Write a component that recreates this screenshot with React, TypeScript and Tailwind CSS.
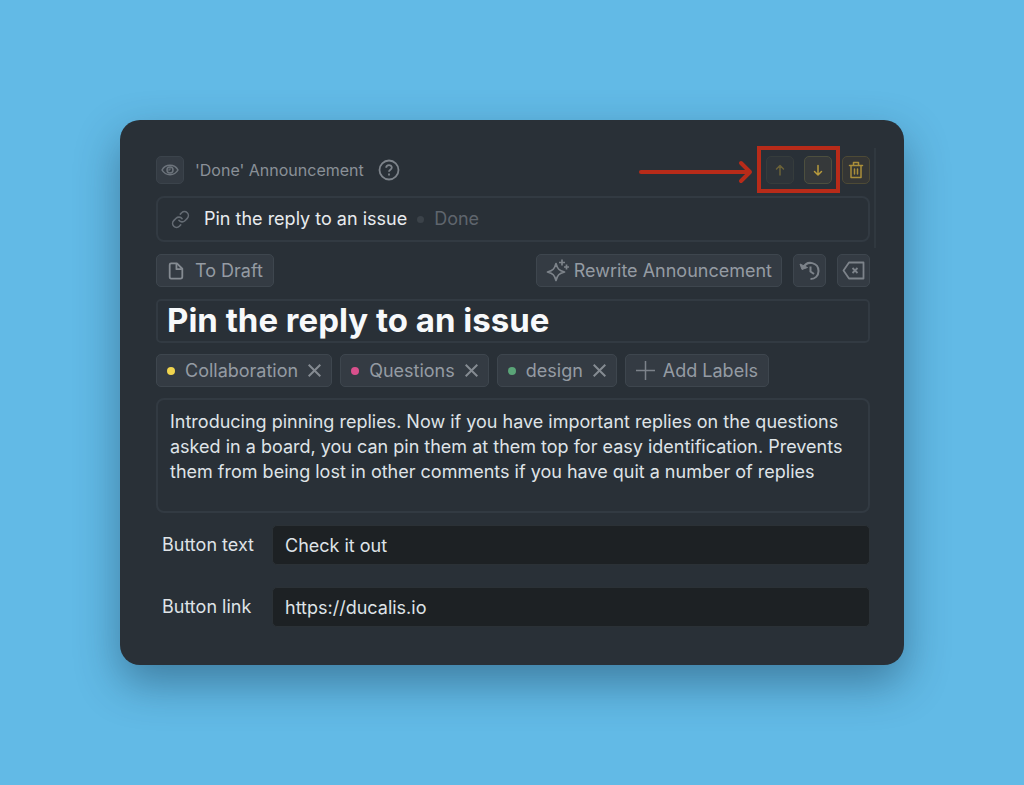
import { useState } from 'react';
import type { ReactNode } from 'react';
import clsx from 'clsx';
import { Link } from 'lucide-react';

interface Label {
  name: string;
  dot: string;
}

const INITIAL_LABELS: Label[] = [
  { name: 'Collaboration', dot: 'bg-[#f0d44e]' },
  { name: 'Questions', dot: 'bg-[#d9508c]' },
  { name: 'design', dot: 'bg-[#5aa578]' },
];

const PANEL = 'border-2 border-[#323a42] bg-transparent outline-none';
const CONTROL = 'flex items-center rounded-[5px] border border-[#3e464e] bg-[#343b43] text-[#959ba3]';

export default function App() {
  const [labels, setLabels] = useState(INITIAL_LABELS);
  const [title, setTitle] = useState('Pin the reply to an issue');
  const [body, setBody] = useState(
    'Introducing pinning replies. Now if you have important replies on the questions asked in a board, you can pin them at them top for easy identification. Prevents them from being lost in other comments if you have quit a number of replies'
  );

  return (
    <div className="min-h-screen bg-[#62bae6] p-[120px] font-['Inter',sans-serif] text-[18px] leading-6 text-[#dfe3e7]">
      <main className="relative flex flex-col gap-3 rounded-[20px] bg-[#293037] pt-9 pr-[34px] pb-[38px] pl-9 shadow-[0_18px_44px_rgba(20,50,75,0.45)]">
        <div className="absolute top-7 right-7 h-[100px] w-[2px] bg-[#30383f]" />

        <header className="flex h-7 items-center">
          <IconButton label="Preview">
            <EyeIcon />
          </IconButton>
          <span className="ml-[11px] text-[16px] text-[#8a9098]">'Done' Announcement</span>
          <button aria-label="Help" className="ml-[14px] text-[#7d838a]">
            <HelpIcon />
          </button>

          <div className="ml-auto flex items-center gap-[10px]">
            <div className="relative flex gap-[10px]">
              <div className="absolute -top-[10px] -right-2 -bottom-[9px] -left-[9px] border-4 border-[#b82b19]" />
              <PointerArrow />
              <IconButton label="Move up" tone="faint">
                <path d="M14 19V9.500M10.500 13L14 9.500L17.500 13" />
              </IconButton>
              <IconButton label="Move down" tone="gold">
                <path d="M14 9.500V19M10.500 15.500L14 19L17.500 15.500" />
              </IconButton>
            </div>
            <IconButton label="Delete" tone="trash">
              <path d="M7.500 9.500H20.500M11.500 9V6.500H16.500V9M9 9.500V21.500H19V9.500M12.500 13V18M15.500 13V18" />
            </IconButton>
          </div>
        </header>

        <div className={clsx(PANEL, 'flex h-[46px] items-center rounded-lg px-[13px]')}>
          <Link size={19} strokeWidth={2} color="#656c74" />
          <a href="#issue" className="ml-[14px] text-[#e8ebee]">Pin the reply to an issue</a>
          <span className="mx-[10px] size-[7px] rounded-full bg-[#3b4249]" />
          <span className="text-[#5f656d]">Done</span>
        </div>

        <div className="flex gap-[11px]">
          <button className={clsx(CONTROL, 'mr-auto h-[33px] gap-[10px] px-[10px]')}>
            <FileIcon />
            To Draft
          </button>
          <button className={clsx(CONTROL, 'h-[33px] gap-1 px-[9px]')}>
            <SparkIcon />
            Rewrite Announcement
          </button>
          <button aria-label="History" className={clsx(CONTROL, 'size-[33px] justify-center')}>
            <HistoryIcon />
          </button>
          <button aria-label="Clear" className={clsx(CONTROL, 'size-[33px] justify-center')}>
            <ClearIcon />
          </button>
        </div>

        <input
          aria-label="Title"
          value={title}
          onChange={(e) => setTitle(e.target.value)}
          className={clsx(PANEL, 'h-11 w-full rounded-[5px] px-[9px] pb-[2px] text-[33px] font-bold text-[#f7f9fb]')}
        />

        <div className="-my-px flex flex-wrap gap-2">
          {labels.map((label) => (
            <div key={label.name} className={clsx(CONTROL, 'h-[33px] gap-[10px] px-[10px]')}>
              <span className={clsx('size-2 rounded-full', label.dot)} />
              {label.name}
              <button
                aria-label={`Remove ${label.name}`}
                onClick={() => setLabels(labels.filter((l) => l.name !== label.name))}
              >
                <svg width="13" height="13" viewBox="0 0 13 13" stroke="#858b92" strokeWidth="2" fill="none">
                  <path d="M0.700 0.700L12.300 12.300M12.300 0.700L0.700 12.300" />
                </svg>
              </button>
            </div>
          ))}
          <button className={clsx(CONTROL, 'h-[33px] gap-2 px-[10px]')}>
            <svg width="19" height="19" viewBox="0 0 19 19" stroke="#7c828a" strokeWidth="1.500">
              <path d="M9.500 0V19M0 9.500H19" />
            </svg>
            Add Labels
          </button>
        </div>

        <textarea
          aria-label="Announcement"
          value={body}
          onChange={(e) => setBody(e.target.value)}
          className={clsx(PANEL, 'h-[115px] w-full resize-none rounded-lg px-3 py-[9px] leading-[25px]')}
        />

        <div className="flex flex-col gap-[22px]">
          <Field id="button-text" label="Button text" value="Check it out" />
          <Field id="button-link" label="Button link" value="https://ducalis.io" />
        </div>
      </main>
    </div>
  );
}

function Field({ id, label, value }: { id: string; label: string; value: string }) {
  return (
    <div className="flex items-center">
      <label htmlFor={id} className="w-[116px] shrink-0 pl-[6px]">
        {label}
      </label>
      <input
        id={id}
        defaultValue={value}
        className="h-10 min-w-0 flex-1 rounded-[5px] border border-[#2b3136] bg-[#1d2124] px-3 outline-none"
      />
    </div>
  );
}

const TONES = {
  gray: 'border-[#3b434b] bg-[#343b43] text-[#6d747c]',
  faint: 'border-[#363c3c] bg-[#2e3439] text-[#6b6238]',
  gold: 'border-[#4d4f3e] bg-[#36393a] text-[#b79a3d]',
  trash: 'border-[#4d4a35] bg-[#353635] text-[#aa8e3a]',
};

function IconButton({ label, tone = 'gray', children }: { label: string; tone?: keyof typeof TONES; children: ReactNode }) {
  return (
    <button aria-label={label} className={clsx('size-7 shrink-0 rounded-[5px] border', TONES[tone])}>
      <svg className="-m-px size-7" viewBox="0 0 28 28" fill="none" stroke="currentColor" strokeWidth="1.500" strokeLinejoin="round" strokeLinecap="round">
        {children}
      </svg>
    </button>
  );
}

function EyeIcon() {
  return (
    <>
      <path d="M6 14C9.500 7.800 18.500 7.800 22 14C18.500 20.200 9.500 20.200 6 14Z" />
      <circle cx="14" cy="14" r="3" />
      <path d="M14 12.500V14H12.500" strokeWidth="1" />
    </>
  );
}

function HelpIcon() {
  return (
    <svg width="22" height="22" viewBox="0 0 22 22" fill="none" stroke="currentColor" strokeWidth="1.800">
      <circle cx="11" cy="11" r="9.500" />
      <path d="M8.200 8.800C8.200 5.200 13.800 5.200 13.800 8.600C13.800 10.700 11 10.700 11 12.800" />
      <path d="M11 14.500V16.500" />
    </svg>
  );
}

function FileIcon() {
  return (
    <svg width="18" height="18" viewBox="0 0 18 20" fill="none" stroke="#858b92" strokeWidth="2" strokeLinejoin="round">
      <path d="M3.500 1.500H10L16 7.500V16.500Q16 18.500 14 18.500H3.500Q2 18.500 2 16.500V3Q2 1.500 3.500 1.500Z" />
      <path d="M9.500 2V8H15.500" />
    </svg>
  );
}

function SparkIcon() {
  return (
    <svg width="24" height="24" viewBox="0 0 24 24" fill="none" stroke="#7d838a" strokeWidth="1.700" strokeLinejoin="round">
      <path d="M10 4.500C11.500 10 13 11.500 18.500 13C13 14.500 11.500 16 10 21.500C8.500 16 7 14.500 1.500 13C7 11.500 8.500 10 10 4.500Z" />
      <path d="M16 0.500V6.500M13 3.500H19M20.500 5.500V10.500M18 8H23" />
    </svg>
  );
}

function HistoryIcon() {
  return (
    <svg width="21" height="20" viewBox="0 0 21 20" fill="none" stroke="#7d838a" strokeWidth="2">
      <path d="M4 7C8 -1.500 19.500 1.500 19.500 10C19.500 15 16 18 11.500 18" />
      <path d="M11.500 5.500V10.500L15 13" />
      <path d="M1 3L3 8.500L8.500 6.500Z" fill="#7d838a" strokeWidth="1" />
    </svg>
  );
}

function ClearIcon() {
  return (
    <svg width="23" height="19" viewBox="0 0 23 19" fill="none" stroke="#7d838a" strokeWidth="1.800" strokeLinejoin="round">
      <path d="M7 1.500H21.500V17.500H7L1.500 9.500Z" />
      <path d="M10.500 7L15.500 12M15.500 7L10.500 12" />
    </svg>
  );
}

// callout pointing at the reorder buttons
function PointerArrow() {
  return (
    <svg className="absolute top-[4px] right-[79px]" width="115" height="24" viewBox="0 0 115 24" fill="none" stroke="#b82b19" strokeWidth="4" strokeLinecap="round" strokeLinejoin="round">
      <path d="M3 12H112M103 3L112 12L103 21" />
    </svg>
  );
}
